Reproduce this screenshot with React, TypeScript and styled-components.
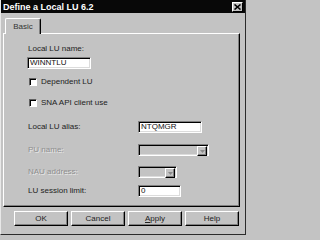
import React from 'react';
import styled, { createGlobalStyle } from 'styled-components';

const GlobalStyle = createGlobalStyle`
  html, body {
    margin: 0;
    padding: 0;
    background: #c3c3c3;
  }
  body {
    font-family: "Liberation Sans", Arial, sans-serif;
    font-size: 8px;
    color: #000;
  }
`;

const Window = styled.div`
  width: 246px;
  height: 235px;
  box-sizing: border-box;
  background: #c3c3c3;
  border-left: 1px solid #e8e8e8;
  border-right: 1px solid #2a2a2a;
  border-bottom: 1px solid #2a2a2a;
  display: flex;
  flex-direction: column;
`;

const TitleBar = styled.div`
  height: 13px;
  flex: none;
  background: #080808;
  color: #fff;
  font-weight: bold;
  font-size: 9px;
  display: flex;
  align-items: center;
  justify-content: space-between;
  padding: 0 2px 0 2px;
`;

const CloseButton = styled.div`
  width: 9px;
  height: 8px;
  background: #c3c3c3;
  border-top: 1px solid #fff;
  border-left: 1px solid #fff;
  border-right: 1px solid #000;
  border-bottom: 1px solid #000;
  display: flex;
  align-items: center;
  justify-content: center;
  svg {
    display: block;
  }
`;

const Body = styled.div`
  padding: 5px 5px 0 2px;
  display: flex;
  flex-direction: column;
`;

const TabStrip = styled.div`
  display: flex;
  padding-left: 2px;
  position: relative;
  z-index: 1;
`;

const Tab = styled.div`
  width: 36px;
  height: 16px;
  box-sizing: border-box;
  margin-bottom: -1px;
  background: #c3c3c3;
  border-top: 1px solid #fff;
  border-left: 1px solid #fff;
  border-right: 1px solid #000;
  border-radius: 2px 2px 0 0;
  box-shadow: inset -1px 0 0 #808080;
  display: flex;
  align-items: center;
  justify-content: center;
  color: #333;
`;

const Panel = styled.div`
  height: 174px;
  box-sizing: border-box;
  border-top: 1px solid #fff;
  border-left: 1px solid #fff;
  border-right: 1px solid #000;
  border-bottom: 1px solid #000;
  box-shadow: inset -1px -1px 0 #808080;
  padding: 0 0 0 23px;
  display: flex;
  flex-direction: column;
`;

const Caption = styled.div<{ $top: number }>`
  margin-top: ${p => p.$top}px;
  padding-left: 1px;
  line-height: 10px;
  color: #222;
`;

const Row = styled.div<{ $top: number }>`
  margin-top: ${p => p.$top}px;
  display: flex;
  align-items: center;
`;

const RowLabel = styled.div<{ $disabled?: boolean }>`
  width: 111px;
  padding-left: 1px;
  box-sizing: border-box;
  line-height: 10px;
  color: ${p => (p.$disabled ? '#8e8e8e' : '#222')};
  text-shadow: ${p => (p.$disabled ? '1px 1px 0 #e8e8e8' : 'none')};
`;

const TextBox = styled.div<{ $width: number }>`
  width: ${p => p.$width}px;
  height: 12px;
  box-sizing: border-box;
  background: #fff;
  border-top: 1px solid #808080;
  border-left: 1px solid #808080;
  border-right: 1px solid #fff;
  border-bottom: 1px solid #fff;
  box-shadow: inset 1px 1px 0 #000, inset -1px -1px 0 #dcdcdc;
  padding-left: 2px;
  line-height: 10px;
  color: #111;
`;

const Combo = styled.div<{ $width: number }>`
  width: ${p => p.$width}px;
  height: 12px;
  box-sizing: border-box;
  background: #c3c3c3;
  border-top: 1px solid #808080;
  border-left: 1px solid #808080;
  border-right: 1px solid #fff;
  border-bottom: 1px solid #fff;
  box-shadow: inset 1px 1px 0 #000, inset -1px -1px 0 #dcdcdc;
  display: flex;
  justify-content: flex-end;
  padding: 1px;
`;

const ComboButton = styled.div`
  width: 8px;
  height: 8px;
  background: #c3c3c3;
  border-top: 1px solid #fff;
  border-left: 1px solid #fff;
  border-right: 1px solid #000;
  border-bottom: 1px solid #000;
  box-shadow: inset -1px -1px 0 #808080;
  display: flex;
  align-items: center;
  justify-content: center;
  svg {
    display: block;
  }
`;

const CheckRow = styled.div<{ $top: number }>`
  margin-top: ${p => p.$top}px;
  display: flex;
  align-items: center;
  gap: 4px;
  padding-left: 2px;
`;

const CheckBox = styled.div`
  width: 8px;
  height: 8px;
  box-sizing: border-box;
  background: #fff;
  border-top: 1px solid #606060;
  border-left: 1px solid #606060;
  border-right: 1px solid #fff;
  border-bottom: 1px solid #fff;
  box-shadow: inset 1px 1px 0 #000;
`;

const CheckLabel = styled.span`
  line-height: 10px;
  color: #222;
`;

const ButtonRow = styled.div`
  margin-top: 4px;
  padding-left: 11px;
  display: flex;
  gap: 3px;
`;

const DialogButton = styled.div`
  width: 54px;
  height: 15px;
  box-sizing: border-box;
  background: #c3c3c3;
  border-top: 1px solid #fff;
  border-left: 1px solid #fff;
  border-right: 1px solid #000;
  border-bottom: 1px solid #000;
  box-shadow: inset -1px -1px 0 #808080;
  display: flex;
  align-items: center;
  justify-content: center;
  color: #222;
  u {
    text-decoration: underline;
  }
`;

const Arrow: React.FC = () => (
  <svg width="5" height="3" viewBox="0 0 5 3">
    <path d="M0 0h5L2.5 3z" fill="#8a8a8a" />
  </svg>
);

const App: React.FC = () => {
  return (
    <>
      <GlobalStyle />
      <Window>
        <TitleBar>
          <span>Define a Local LU 6.2</span>
          <CloseButton>
            <svg width="7" height="6" viewBox="0 0 7 6">
              <path d="M0.5 0.5L6.5 5.5M6.5 0.5L0.5 5.5" stroke="#000" strokeWidth="1.6" />
            </svg>
          </CloseButton>
        </TitleBar>
        <Body>
          <TabStrip>
            <Tab>Basic</Tab>
          </TabStrip>
          <Panel>
            <Caption $top={10}>Local LU name:</Caption>
            <TextBox $width={64} style={{ marginTop: 3 }}>WINNTLU</TextBox>
            <CheckRow $top={8}>
              <CheckBox />
              <CheckLabel>Dependent LU</CheckLabel>
            </CheckRow>
            <CheckRow $top={11}>
              <CheckBox />
              <CheckLabel>SNA API client use</CheckLabel>
            </CheckRow>
            <Row $top={13}>
              <RowLabel>Local LU alias:</RowLabel>
              <TextBox $width={64}>NTQMGR</TextBox>
            </Row>
            <Row $top={11}>
              <RowLabel $disabled>PU name:</RowLabel>
              <Combo $width={71}>
                <ComboButton>
                  <Arrow />
                </ComboButton>
              </Combo>
            </Row>
            <Row $top={10}>
              <RowLabel $disabled>NAU address:</RowLabel>
              <Combo $width={39}>
                <ComboButton>
                  <Arrow />
                </ComboButton>
              </Combo>
            </Row>
            <Row $top={7}>
              <RowLabel>LU session limit:</RowLabel>
              <TextBox $width={43}>0</TextBox>
            </Row>
          </Panel>
          <ButtonRow>
            <DialogButton>OK</DialogButton>
            <DialogButton>Cancel</DialogButton>
            <DialogButton>
              <span>
                <u>A</u>pply
              </span>
            </DialogButton>
            <DialogButton>Help</DialogButton>
          </ButtonRow>
        </Body>
      </Window>
    </>
  );
};

export default App;
